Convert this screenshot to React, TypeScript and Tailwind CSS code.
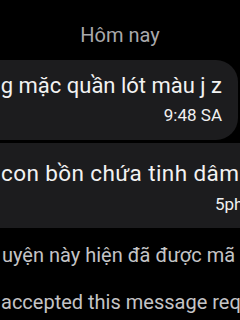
export default function App() {
  return (
    <div
      className="w-[240px] h-[320px] overflow-hidden bg-black flex flex-col"
      style={{ fontFamily: "Roboto, 'Noto Sans', sans-serif" }}
    >
      {/* day divider */}
      <div className="pt-[23px] h-[60px] text-center text-[20px] leading-[24px] text-[#a9a9ab]">
        Hôm nay
      </div>

      {/* sent bubble, runs off the left edge */}
      <div className="ml-[-60px] w-[298px] shrink-0 rounded-r-[22px] bg-[#1c1c1e] pt-[13px] pb-[15px] pr-[16px] flex flex-col items-end">
        <div className="whitespace-nowrap text-[22px] leading-[26px] text-[#f2f2f2]">
          ng mặc quần lót màu j z
        </div>
        <div className="mt-[6px] whitespace-nowrap text-[17px] leading-[20px] text-[#f0f0f0]">
          9:48 SA
        </div>
      </div>

      {/* received bubble, wider than the screen */}
      <div className="mt-[3px] ml-[-20px] w-[320px] shrink-0 rounded-[22px] bg-[#1c1c1e] pt-[17px] pb-[14px] pl-[21px]">
        <div className="whitespace-nowrap text-[22.5px] leading-[26px] tracking-[0.4px] text-[#f2f2f2]">
          con bồn chứa tinh dâm
        </div>
        <div className="mt-[8px] pl-[214px] whitespace-nowrap text-[17px] leading-[20px] text-[#f0f0f0]">
          5phút
        </div>
      </div>

      {/* notice lines */}
      <div className="mt-[15px] pl-[2px] whitespace-nowrap text-[20px] leading-[24px] text-[#c4c4c6]">
        uyện này hiện đã được mã
      </div>
      <div className="mt-[23px] pl-[1px] whitespace-nowrap text-[20px] leading-[24px] text-[#c4c4c6]">
        accepted this message request.
      </div>
    </div>
  );
}
